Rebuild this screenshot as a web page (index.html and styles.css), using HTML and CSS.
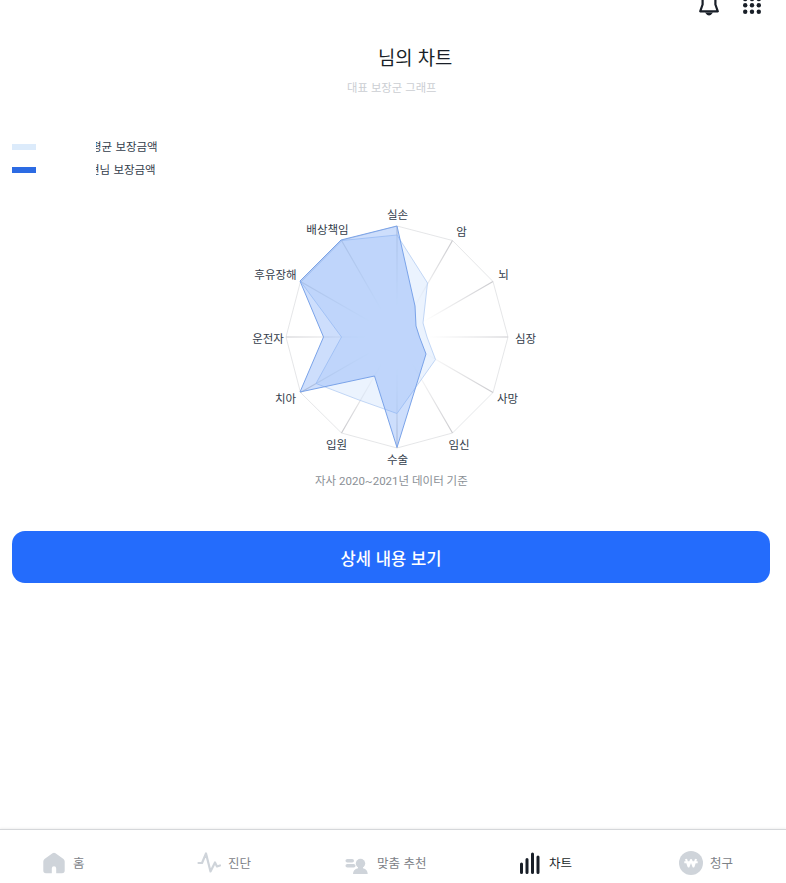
FILE: index.html
```html
<!DOCTYPE html>
<html lang="ko">
<head>
<meta charset="utf-8">
<title>차트</title>
<link rel="stylesheet" href="styles.css">
</head>
<body>
<header class="topbar">
  <svg class="bell" width="22" height="28" viewBox="0 0 22 28"><path d="M4.600 15.500V9a6.400 6.400 0 0 1 12.800 0v6.500L19.800 22.300H2.200z" fill="none" stroke="#191f28" stroke-width="2.200" stroke-linejoin="round"/><path d="M7 23.500q4 6 8 0z" fill="#191f28"/></svg>
  <svg class="grid" width="20" height="28" viewBox="0 0 20 28" fill="#191f28"><circle cx="3.200" cy="10" r="2.200"/><circle cx="10" cy="10" r="2.200"/><circle cx="16.800" cy="10" r="2.200"/><circle cx="3.200" cy="16.200" r="2.200"/><circle cx="10" cy="16.200" r="2.200"/><circle cx="16.800" cy="16.200" r="2.200"/><circle cx="3.200" cy="22.700" r="2.200"/><circle cx="10" cy="22.700" r="2.200"/><circle cx="16.800" cy="22.700" r="2.200"/></svg>
</header>
<main>
  <h1 class="title">님의 차트</h1>
  <p class="subtitle">대표 보장군 그래프</p>
  <ul class="legend">
    <li><span class="swatch average"></span><span class="clip"><span class="legend-text first">평균 보장금액</span></span></li>
    <li><span class="swatch own"></span><span class="clip"><span class="legend-text second">현님 보장금액</span></span></li>
  </ul>
  <svg class="radar" width="320" height="270" viewBox="237 200 320 270">
    <defs>
      <radialGradient id="axis" gradientUnits="userSpaceOnUse" cx="397" cy="337" r="111">
        <stop offset=".28" stop-color="#d0d0d3" stop-opacity="0"/><stop offset="1" stop-color="#cacace"/>
      </radialGradient>
    </defs>
    <path class="ring" d="M397 226L452.500 240.500L493 281.500L508 337L493 392.500L452.500 433L397 448L341.500 433L300.500 392.500L286 337L300.500 281.500L341.500 240.500Z"/>
    <g stroke="url(#axis)" stroke-width="1.200"><path d="M397 337L397.010 226M397 337L452.500 240.500M397 337L493 281.500M397 337L508 337.010M397 337L493 392.500M397 337L452.500 433M397 337L397.010 448M397 337L341.500 433M397 337L300.500 392.500M397 337L286 337.010M397 337L300.500 281.500M397 337L341.500 240.500"/></g>
    <path class="area-average" d="M397 235L427.500 283L423 323L427 337L435.500 359.500L421 380L397 413.500L359 400L316 383.500L341.500 337L301 282L342 240.500Z"/>
    <path class="area-own" d="M397 226L415 306L416 326L419.500 337L426 354L417 383L397 447.500L374.500 376L300 392L323.500 337L300 281L341 240Z"/>
    <g class="labels">
      <text x="397.500" y="219">실손</text><text x="461.500" y="236">암</text><text x="503.500" y="279">뇌</text>
      <text x="525.500" y="343">심장</text><text x="507.500" y="403">사망</text><text x="459" y="449">임신</text>
      <text x="397.500" y="464">수술</text><text x="336.500" y="449">입원</text><text x="285.500" y="403">치아</text>
      <text x="268" y="343">운전자</text><text x="275.500" y="279">후유장해</text><text x="327.500" y="234">배상책임</text>
    </g>
  </svg>
  <p class="source">자사 2020~2021년 데이터 기준</p>
  <button class="detail">상세 내용 보기</button>
</main>
<nav class="tabs">
  <a class="tab home"><svg width="24" height="24" viewBox="0 0 24 24"><path d="M10.500 2.300Q12 1 13.500 2.300L21.500 8Q22.700 9 22.700 10.500V19.500Q22.700 22.300 20 22.300H14.200V17.500a2.200 2.200 0 0 0-4.400 0V22.300H4Q1.300 22.300 1.300 19.500V10.500Q1.300 9 2.500 8Z" fill="#cfd4da"/></svg><span>홈</span></a>
  <a class="tab check"><svg width="24" height="24" viewBox="0 0 24 24"><path d="M1.500 12H5L9 2.500L13.500 20.500L18 11.500L20 15.500L23 14.500" fill="none" stroke="#cfd4da" stroke-width="2.200" stroke-linecap="round" stroke-linejoin="round"/></svg><span>진단</span></a>
  <a class="tab match"><svg width="24" height="24" viewBox="0 0 24 24" fill="#cfd4da"><rect x="1.500" y="8" width="8.500" height="3.600" rx="1.800"/><rect x="1.500" y="13" width="10" height="3.600" rx="1.800"/><circle cx="16.500" cy="12.500" r="4.700"/><path d="M9 23Q9 18.500 14 17.300V15H19V17.300Q23.700 18.500 23.700 23Z"/></svg><span>맞춤 추천</span></a>
  <a class="tab chart"><svg width="24" height="24" viewBox="0 0 24 24"><path d="M3.500 13V21.500M9 8.500V21.500M14.500 3V21.500M20 6V21.500" fill="none" stroke="#191f28" stroke-width="3" stroke-linecap="round"/></svg><span>차트</span></a>
  <a class="tab claim"><svg width="24" height="24" viewBox="0 0 24 24"><circle cx="12" cy="12" r="12" fill="#cfd4da"/><path d="M7 8L9.500 15.500L12 9L14.500 15.500L17 8M5.300 11.300H18.700" fill="none" stroke="#fff" stroke-width="2.100" stroke-linejoin="round"/></svg><span>청구</span></a>
</nav>
</body>
</html>
```
FILE: styles.css
```css
* { box-sizing: border-box; }
body {
  margin: 0;
  height: 883px;
  display: flex;
  flex-direction: column;
  overflow: hidden;
  background: #fff;
  color: #333d4b;
  font-family: "Noto Sans CJK KR", sans-serif;
}
.topbar {
  display: flex;
  justify-content: flex-end;
  gap: 22px;
  height: 28px;
  padding-right: 24px;
  margin-top: -11px;
}
main { flex: 1; display: flex; flex-direction: column; }
.title {
  margin: 26px 0 0 378px;
  font-size: 18.8px;
  line-height: 28px;
  font-weight: 400;
  color: #191f28;
}
.subtitle {
  margin: 6px 0 0 347px;
  font-size: 11.3px;
  line-height: 20px;
  color: #cbced3;
}
.legend {
  list-style: none;
  margin: 38px 0 0;
  padding: 0 12px;
}
.legend li { display: flex; align-items: center; height: 23px; }
.swatch { width: 24px; height: 6px; margin-right: 60px; }
.average { background: #dcebfb; }
.own { background: #2c6be3; }
.clip { overflow: hidden; font-size: 11.5px; line-height: 20px; margin-bottom: 2px; }
.legend-text { display: block; white-space: nowrap; }
.first { margin-left: -5px; }
.second { margin-left: -7px; }
.radar { display: block; margin: 19px 0 0 237px; flex: none; }
.ring { fill: none; stroke: #dedfe2; stroke-width: .8; }
.area-average { fill: rgba(210, 228, 252, .45); stroke: #b4cdf3; stroke-width: .8; }
.area-own { fill: rgba(91, 145, 244, .3); stroke: #7aa3e9; stroke-width: 1; }
.labels { font-size: 11.5px; fill: #333d4b; text-anchor: middle; }
.source {
  margin: 1px 0 0 315px;
  font-family: Roboto, "Noto Sans CJK KR", sans-serif;
  font-size: 11.5px;
  line-height: 20px;
  color: #8b9096;
}
.detail {
  width: 758px;
  height: 52px;
  margin: 40px 0 0 12px;
  padding: 2px 0 0;
  border: 0;
  border-radius: 13px;
  background: #246cfc;
  color: #fff;
  font: 500 16.6px "Noto Sans CJK KR", sans-serif;
}
.tabs {
  height: 54px;
  display: grid;
  grid-template-columns: 154px 149px 174px 160px 149px;
  border-top: 1px solid #d5d7da;
  box-shadow: 0 -1px 2px rgba(0, 0, 0, .06);
  padding-top: 13px;
}
.tab { display: flex; align-items: center; gap: 7px; font-size: 12.5px; color: #7d8288; white-space: nowrap; }
.tab svg { flex: none; }
.tab span { margin-bottom: 1px; }
.home { padding-left: 42px; }
.check { padding-left: 43px; }
.match { padding-left: 41px; gap: 9px; }
.chart { padding-left: 41px; gap: 7px; color: #191f28; }
.claim { padding-left: 42px; }
```
